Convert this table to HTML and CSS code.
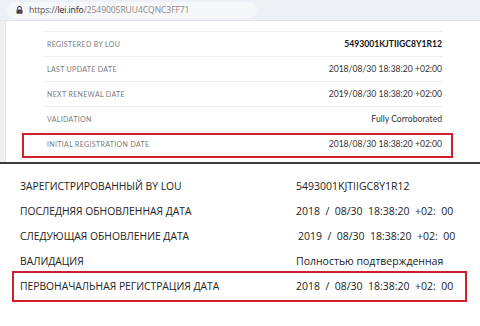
FILE: index.html
```html
<!DOCTYPE html>
<html>
<head>
<meta charset="utf-8">
<link rel="stylesheet" href="styles.css">
</head>
<body>
<div class="urlbar">
  <div class="pill">
    <svg class="lock" width="7" height="8" viewBox="0 0 7 8"><path d="M1.6 3.6V2.4a1.9 1.9 0 0 1 3.8 0v1.2" fill="none" stroke="#444" stroke-width="1.1"/><rect x="0.5" y="3.5" width="6" height="4.3" rx="0.6" fill="#444"/></svg>
    <span class="u-proto">https://</span><span class="u-host">lei.info</span><span class="u-path">/2549005RUU4CQNC3FF71</span>
  </div>
</div>
<div class="page1">
  <div class="strip"></div>
  <div class="table1">
    <div class="row1"><span class="lbl1">REGISTERED BY LOU</span><span class="val1 bold">5493001KJTIIGC8Y1R12</span></div>
    <div class="row1"><span class="lbl1">LAST UPDATE DATE</span><span class="val1">2018/08/30 18:38:20 +02:00</span></div>
    <div class="row1"><span class="lbl1">NEXT RENEWAL DATE</span><span class="val1">2019/08/30 18:38:20 +02:00</span></div>
    <div class="row1"><span class="lbl1">VALIDATION</span><span class="val1">Fully Corroborated</span></div>
    <div class="row1 mark1"><span class="lbl1">INITIAL REGISTRATION DATE</span><span class="val1">2018/08/30 18:38:20 +02:00</span><div class="box box1"></div></div>
  </div>
</div>
<div class="divider"></div>
<div class="page2">
  <div class="row2"><span class="lbl2">ЗАРЕГИСТРИРОВАННЫЙ BY LOU</span><span class="val2">5493001KJTIIGC8Y1R12</span></div>
  <div class="row2"><span class="lbl2">ПОСЛЕДНЯЯ ОБНОВЛЕННАЯ ДАТА</span><span class="val2 date">2018 / 08/30 18:38:20 +02: 00</span></div>
  <div class="row2"><span class="lbl2">СЛЕДУЮЩАЯ ОБНОВЛЕНИЕ ДАТА</span><span class="val2 date indent">2019 / 08/30 18:38:20 +02: 00</span></div>
  <div class="row2"><span class="lbl2">ВАЛИДАЦИЯ</span><span class="val2">Полностью подтвержденная</span></div>
  <div class="row2 mark2"><span class="lbl2">ПЕРВОНАЧАЛЬНАЯ РЕГИСТРАЦИЯ ДАТА</span><span class="val2 date">2018 / 08/30 18:38:20 +02: 00</span><div class="box box2"></div></div>
</div>
</body>
</html>
```
FILE: styles.css
```css
html, body {
  margin: 0;
  padding: 0;
  width: 480px;
  height: 326px;
  overflow: hidden;
  background: #fff;
}
.urlbar {
  height: 18px;
  background: #edf0f4;
  border-bottom: 1px solid #dfe3e8;
  padding: 2px 0 0 7px;
  box-sizing: content-box;
}
.pill {
  width: 250px;
  height: 16px;
  border-radius: 8px;
  background: #f6f7f9;
  display: flex;
  align-items: center;
  padding-left: 9px;
  box-sizing: border-box;
  font-family: "Open Sans", "Noto Sans", sans-serif;
  font-size: 8.6px;
  letter-spacing: -0.1px;
}
.lock { margin-right: 6px; margin-top: -1px; }
.u-proto { color: #555; }
.u-host { color: #222; }
.u-path { color: #8a8a8a; }

.page1 {
  display: flex;
  height: 141px;
}
.strip {
  width: 5px;
  background: #f1f1f1;
  border-right: 1px solid #e6e6e6;
}
.table1 {
  margin-left: 39px;
  width: 397px;
  padding-top: 10px;
}
.row1 {
  position: relative;
  height: 25px;
  border-top: 1px solid #eeeeee;
  box-sizing: border-box;
  display: flex;
  align-items: center;
  justify-content: space-between;
  padding-left: 2px;
  font-family: "Lato", "Liberation Sans", sans-serif;
}
.lbl1 {
  font-size: 7px;
  color: #7a7a7a;
  letter-spacing: 0.35px;
  margin-top: -1px;
}
.val1 {
  font-size: 8.6px;
  color: #333;
}
.val1.bold {
  font-weight: 700;
  color: #111;
}
.box {
  position: absolute;
  border: 2px solid #d21f2d;
  pointer-events: none;
}
.box1 {
  left: -23px;
  right: -11px;
  top: 1px;
  bottom: -2px;
}
.divider {
  height: 2px;
  background: #3c3c3c;
}
.page2 {
  padding-top: 9px;
  font-family: "Open Sans", "Noto Sans", sans-serif;
  font-size: 10.3px;
  color: #222;
}
.row2 {
  position: relative;
  height: 25px;
  display: grid;
  grid-template-columns: 276px 1fr;
  align-items: center;
  padding-left: 20px;
}
.val2 { font-size: 10.5px; }
.date { word-spacing: 2.7px; }
.indent { padding-left: 2px; }
.box2 {
  left: 12px;
  width: 451px;
  top: -2px;
  bottom: -4px;
}
```
